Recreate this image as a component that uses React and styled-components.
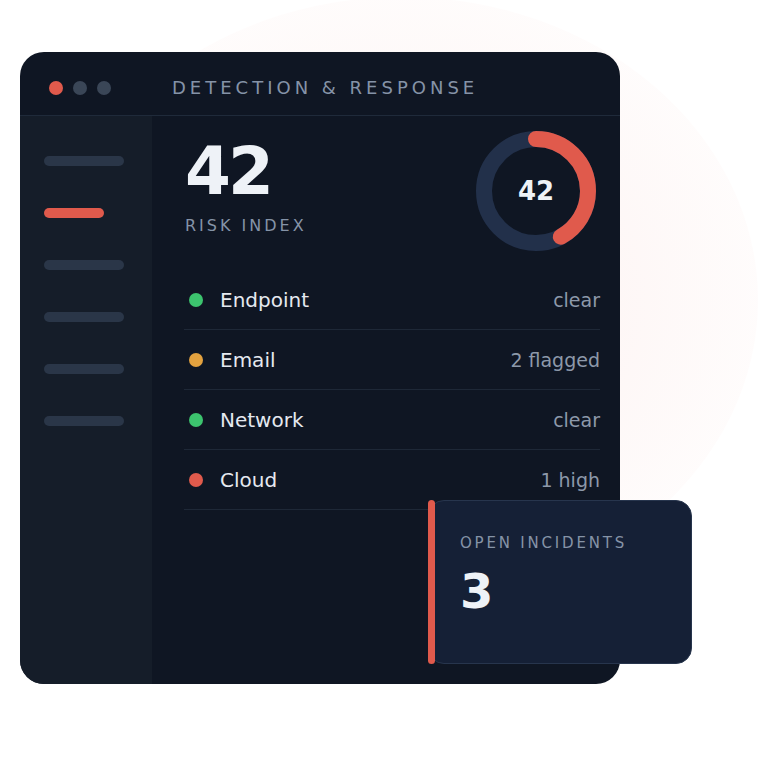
import styled, { createGlobalStyle } from "styled-components";

const GlobalStyle = createGlobalStyle`
  html, body {
    margin: 0;
    padding: 0;
    background: #ffffff;
    font-family: "DejaVu Sans", "Liberation Sans", sans-serif;
  }
`;

const Page = styled.div`
  position: relative;
  width: 760px;
  height: 784px;
  overflow: hidden;
  padding: 52px 0 0 20px;
  box-sizing: border-box;
`;

const Blob = styled.div`
  position: absolute;
  left: 46px;
  top: -3px;
  width: 712px;
  height: 606px;
  border-radius: 50%;
  background: radial-gradient(
    closest-side,
    rgba(232, 96, 80, 0.085) 0%,
    rgba(232, 96, 80, 0.06) 50%,
    rgba(232, 96, 80, 0.035) 80%,
    rgba(232, 96, 80, 0.02) 100%
  );
`;

const Window = styled.div`
  position: relative;
  z-index: 1;
  width: 600px;
  height: 632px;
  border-radius: 24px;
  background: #0f1623;
  display: flex;
  flex-direction: column;
`;

const TitleBar = styled.div`
  height: 64px;
  box-sizing: border-box;
  border-bottom: 1px solid #1f2a3a;
  display: flex;
  align-items: center;
  padding: 8px 0 0 29px;
`;

const Dots = styled.div`
  display: flex;
  gap: 10px;
`;

const Dot = styled.span`
  width: 14px;
  height: 14px;
  border-radius: 50%;
  background: ${(p) => (p.$active ? "#e05a4c" : "#3a4657")};
`;

const Title = styled.div`
  margin-left: 61px;
  font-size: 18px;
  letter-spacing: 4px;
  color: #8593a7;
`;

const Body = styled.div`
  flex: 1;
  display: flex;
  min-height: 0;
`;

const Sidebar = styled.div`
  width: 132px;
  background: #151d29;
  border-bottom-left-radius: 24px;
  padding: 40px 0 0 24px;
  box-sizing: border-box;
  display: flex;
  flex-direction: column;
  gap: 42px;
`;

const NavBar = styled.span`
  display: block;
  width: ${(p) => (p.$active ? 60 : 80)}px;
  height: 10px;
  border-radius: 5px;
  background: ${(p) => (p.$active ? "#e05a4c" : "#2a3648")};
`;

const Main = styled.div`
  flex: 1;
  padding: 0 20px 0 32px;
`;

const TopRow = styled.div`
  height: 154px;
  padding-top: 15px;
  box-sizing: border-box;
  display: flex;
  justify-content: space-between;
  align-items: flex-start;
`;

const Score = styled.div`
  margin-top: 8px;
  padding-left: 1px;
`;

const BigNumber = styled.div`
  font-size: 66px;
  line-height: 1;
  font-weight: 700;
  letter-spacing: -3px;
  color: #eef2f7;
`;

const Caption = styled.div`
  margin-top: 13px;
  font-size: 16px;
  line-height: 1;
  letter-spacing: 3px;
  color: #8593a7;
`;

const Donut = styled.div`
  position: relative;
  width: 120px;
  height: 120px;
  margin-right: 4px;
`;

const DonutLabel = styled.div`
  position: absolute;
  inset: 0;
  display: flex;
  align-items: center;
  justify-content: center;
  font-size: 26px;
  font-weight: 700;
  color: #eef2f7;
`;

const List = styled.div`
  display: flex;
  flex-direction: column;
`;

const Row = styled.div`
  height: 60px;
  box-sizing: border-box;
  border-bottom: 1px solid #1e2837;
  display: flex;
  align-items: center;
  padding-left: 5px;
`;

const StatusDot = styled.span`
  width: 14px;
  height: 14px;
  border-radius: 50%;
  background: ${(p) => p.$color};
  flex-shrink: 0;
`;

const Label = styled.span`
  margin-left: 17px;
  font-size: 20px;
  color: #e5e9f0;
`;

const Value = styled.span`
  margin-left: auto;
  font-size: 19px;
  color: #8d99aa;
`;

const IncidentCard = styled.div`
  position: absolute;
  left: 408px;
  top: 448px;
  width: 264px;
  height: 164px;
  box-sizing: border-box;
  border-radius: 16px;
  background: #152036;
  border: 1px solid #27354d;
  padding: 35px 0 0 31px;

  &::before {
    content: "";
    position: absolute;
    left: -1px;
    top: -1px;
    bottom: -1px;
    width: 7px;
    border-radius: 4px;
    background: #e05a4c;
  }
`;

const IncidentLabel = styled.div`
  font-size: 15px;
  line-height: 1;
  letter-spacing: 2.8px;
  color: #8593a7;
`;

const IncidentCount = styled.div`
  margin-top: 16px;
  font-size: 48px;
  line-height: 1;
  font-weight: 700;
  color: #eef2f7;
`;

const rows = [
  { name: "Endpoint", status: "clear", color: "#3cc46e" },
  { name: "Email", status: "2 flagged", color: "#e3a23f" },
  { name: "Network", status: "clear", color: "#3cc46e" },
  { name: "Cloud", status: "1 high", color: "#e05a4c" },
];

function RiskDonut({ value }) {
  const r = 52;
  const c = 2 * Math.PI * r;
  const dash = (value / 100) * c;
  return (
    <Donut>
      <svg width="120" height="120" viewBox="0 0 120 120">
        <circle cx="60" cy="60" r={r} fill="none" stroke="#22304a" strokeWidth="16" />
        <circle
          cx="60"
          cy="60"
          r={r}
          fill="none"
          stroke="#e05a4c"
          strokeWidth="16"
          strokeLinecap="round"
          strokeDasharray={`${dash} ${c}`}
          transform="rotate(-90 60 60)"
        />
      </svg>
      <DonutLabel>{value}</DonutLabel>
    </Donut>
  );
}

export default function App() {
  return (
    <>
      <GlobalStyle />
      <Page>
        <Blob />
        <Window>
          <TitleBar>
            <Dots>
              <Dot $active />
              <Dot />
              <Dot />
            </Dots>
            <Title>DETECTION &amp; RESPONSE</Title>
          </TitleBar>
          <Body>
            <Sidebar>
              <NavBar />
              <NavBar $active />
              <NavBar />
              <NavBar />
              <NavBar />
              <NavBar />
            </Sidebar>
            <Main>
              <TopRow>
                <Score>
                  <BigNumber>42</BigNumber>
                  <Caption>RISK INDEX</Caption>
                </Score>
                <RiskDonut value={42} />
              </TopRow>
              <List>
                {rows.map((row) => (
                  <Row key={row.name}>
                    <StatusDot $color={row.color} />
                    <Label>{row.name}</Label>
                    <Value>{row.status}</Value>
                  </Row>
                ))}
              </List>
            </Main>
          </Body>
          <IncidentCard>
            <IncidentLabel>OPEN INCIDENTS</IncidentLabel>
            <IncidentCount>3</IncidentCount>
          </IncidentCard>
        </Window>
      </Page>
    </>
  );
}
